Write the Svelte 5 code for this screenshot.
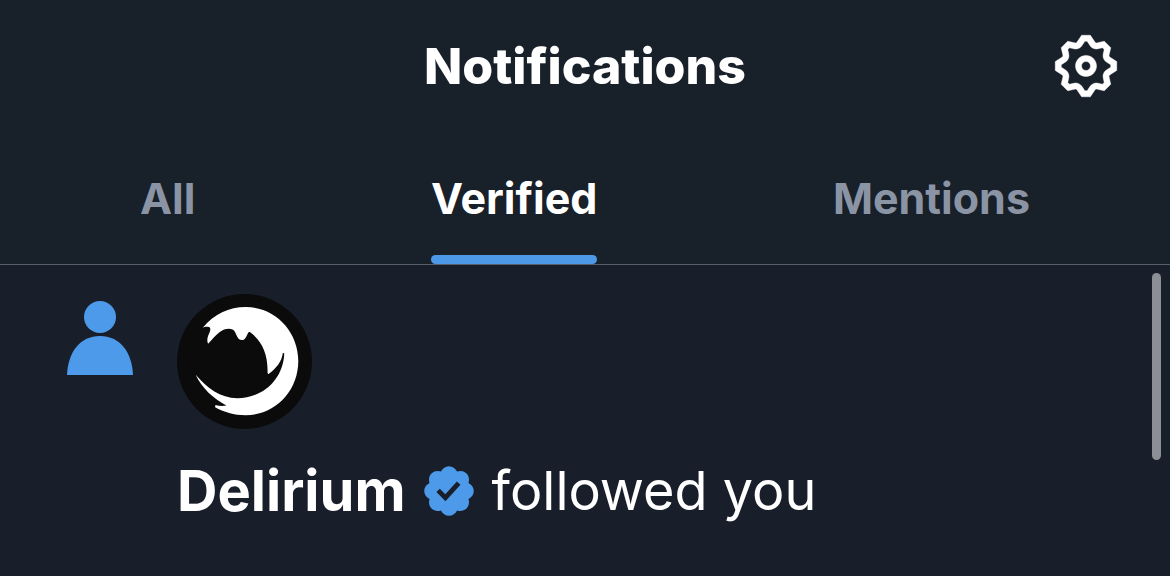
<script lang="ts">
  let tabs = ['All', 'Verified', 'Mentions'];
  let active = $state('Verified');

  let notifications = [{ name: 'Delirium', action: 'followed you' }];
</script>

<main class="screen">
  <header class="topbar">
    <h1>Notifications</h1>
    <button class="settings" aria-label="Settings">
      <svg viewBox="0 0 24 24" aria-hidden="true">
        <path d="M10.54 1.75h2.92l1.57 2.36c.11.17.32.25.53.21l2.53-.59 2.17 2.17-.58 2.54c-.05.2.04.41.21.53l2.36 1.57v2.92l-2.36 1.57c-.17.12-.26.33-.21.53l.58 2.54-2.17 2.17-2.53-.59c-.21-.04-.42.04-.53.21l-1.57 2.36h-2.92l-1.58-2.36c-.11-.17-.32-.25-.52-.21l-2.54.59-2.17-2.17.58-2.54c.05-.2-.03-.41-.21-.53l-2.35-1.57v-2.92L4.1 8.97c.18-.12.26-.33.21-.53L3.73 5.9 5.9 3.73l2.54.59c.2.04.41-.04.52-.21l1.58-2.36zm1.07 2l-.98 1.47C10.05 6.08 9 6.5 7.99 6.27l-1.46-.34-.6.6.33 1.46c.24 1.01-.18 2.07-1.05 2.64l-1.46.98v.78l1.46.98c.87.57 1.29 1.63 1.05 2.64l-.33 1.46.6.6 1.46-.34c1.01-.23 2.06.19 2.64 1.05l.98 1.47h.78l.97-1.47c.58-.86 1.63-1.28 2.65-1.05l1.45.34.61-.6-.34-1.46c-.23-1.01.18-2.07 1.05-2.64l1.47-.98v-.78l-1.47-.98c-.87-.57-1.28-1.63-1.05-2.64l.34-1.46-.61-.6-1.45.34c-1.02.23-2.07-.19-2.65-1.05l-.97-1.47h-.78zM12 10.5c-.83 0-1.5.67-1.5 1.5s.67 1.5 1.5 1.5 1.5-.67 1.5-1.5-.67-1.5-1.5-1.5zM8.5 12c0-1.93 1.56-3.5 3.5-3.5 1.93 0 3.5 1.57 3.5 3.5s-1.57 3.5-3.5 3.5c-1.94 0-3.5-1.57-3.5-3.5z" />
      </svg>
    </button>
  </header>

  <nav class="tabs">
    {#each tabs as tab}
      <button class="tab" class:active={tab === active} onclick={() => (active = tab)}>{tab}</button>
    {/each}
  </nav>

  <section class="list">
    {#each notifications as item}
      <article class="item">
        <svg class="person" viewBox="0 0 68 76" aria-hidden="true">
          <circle cx="34" cy="17" r="16" />
          <path d="M1 75C2 52 14 36 34 36s32 16 33 39z" />
        </svg>

        <div class="body">
          <svg class="avatar" viewBox="0 0 404 404" role="img" aria-label={item.name}>
            <circle class="disc" cx="202" cy="202" r="202" />
            <path
              class="swirl"
              d="M77 101C110 61 156 39 206 39c88 0 157 73 157 161 0 92-70 163-158 163-34 0-66-10-91-24l1-7c10 3 20 4 33 2-38-20-74-52-92-92 34 40 74 70 124 70 76 0 138-56 141-134l-4-2c-4 28-20 46-42 63-3 2-4-2-4-7 1-54-18-93-53-118-8-4-8 22-22 24-18 1-17-22-28-31-12-6-28-3-40 7-12 9-22 22-35 35-5-11-1-22 4-33 4-9 4-15-2-17-8-2-13 0-20 3z"
            />
          </svg>

          <p class="text">
            <strong>{item.name}</strong>
            <svg class="badge" viewBox="0 0 24 24" role="img" aria-label="Verified account">
              <path d="M22.25 12c0-1.43-.88-2.67-2.19-3.34.46-1.39.2-2.9-.81-3.91s-2.52-1.27-3.91-.81c-.66-1.31-1.91-2.19-3.34-2.19s-2.67.88-3.33 2.19c-1.4-.46-2.91-.2-3.92.81s-1.26 2.52-.8 3.91c-1.31.67-2.2 1.91-2.2 3.34s.89 2.67 2.2 3.34c-.46 1.39-.21 2.9.8 3.91s2.52 1.26 3.91.81c.67 1.31 1.91 2.19 3.34 2.19s2.68-.88 3.34-2.19c1.39.45 2.9.2 3.91-.81s1.27-2.52.81-3.91c1.31-.67 2.19-1.91 2.19-3.34zm-11.71 4.2L6.8 12.46l1.41-1.42 2.26 2.26 4.8-5.23 1.47 1.36-6.2 6.77z" />
            </svg>
            <span>{item.action}</span>
          </p>
        </div>
      </article>
    {/each}
    <div class="scroll-thumb" aria-hidden="true"></div>
  </section>
</main>

<style>
  :global(body) {
    background: #181f2a;
  }

  .screen {
    min-height: 100vh;
    background: #181f2a;
    color: #fff;
    font-family: Inter, 'Liberation Sans', sans-serif;
  }

  button {
    border: 0;
    background: none;
    font: inherit;
    color: inherit;
    cursor: pointer;
  }

  /* Header */
  .topbar {
    display: grid;
    grid-template-columns: 1fr auto 1fr;
    align-items: center;
    padding: 30px 48px;
    background: #18202a;
  }

  h1 {
    grid-column: 2;
    margin: 0;
    font-size: 50px;
    line-height: 72px;
    font-weight: 800;
  }

  .settings {
    justify-self: end;
    padding: 0;
  }

  .settings svg {
    display: block;
    width: 72px;
    height: 72px;
    fill: #fff;
    stroke: #fff;
    stroke-width: 0.15;
  }

  /* Tabs */
  .tabs {
    display: flex;
    justify-content: space-between;
    padding: 0 140px;
    border-bottom: 1px solid #57606b;
    background: #18202a;
  }

  .tab {
    position: relative;
    padding: 36px 0;
    font-size: 43px;
    line-height: 60px;
    font-weight: 700;
    color: #8b94a5;
  }

  .tab.active {
    color: #fff;
  }

  .tab.active::after {
    content: '';
    position: absolute;
    left: 0;
    right: 0;
    bottom: 0;
    height: 9px;
    border-radius: 5px;
    background: #4d99e8;
  }

  /* List */
  .list {
    position: relative;
  }

  .item {
    display: flex;
    gap: 43px;
    padding: 29px 66px 44px;
  }

  .person {
    flex: none;
    width: 68px;
    height: 76px;
    margin-top: 6px;
    fill: #4d9aeb;
  }

  .avatar {
    display: block;
    width: 135px;
    height: 135px;
  }

  .disc {
    fill: #0b0b0b;
  }

  .swirl {
    fill: #fff;
  }

  .text {
    display: flex;
    align-items: center;
    gap: 14px;
    margin: 28px 0 0;
    font-size: 54px;
    line-height: 68px;
  }

  strong {
    font-size: 56px;
    font-weight: 700;
  }

  .badge {
    flex: none;
    width: 58px;
    height: 58px;
    fill: #4d9aeb;
  }

  .scroll-thumb {
    position: absolute;
    top: 8px;
    right: 9px;
    width: 9px;
    height: 187px;
    border-radius: 5px;
    background: #8b9096;
  }
</style>
